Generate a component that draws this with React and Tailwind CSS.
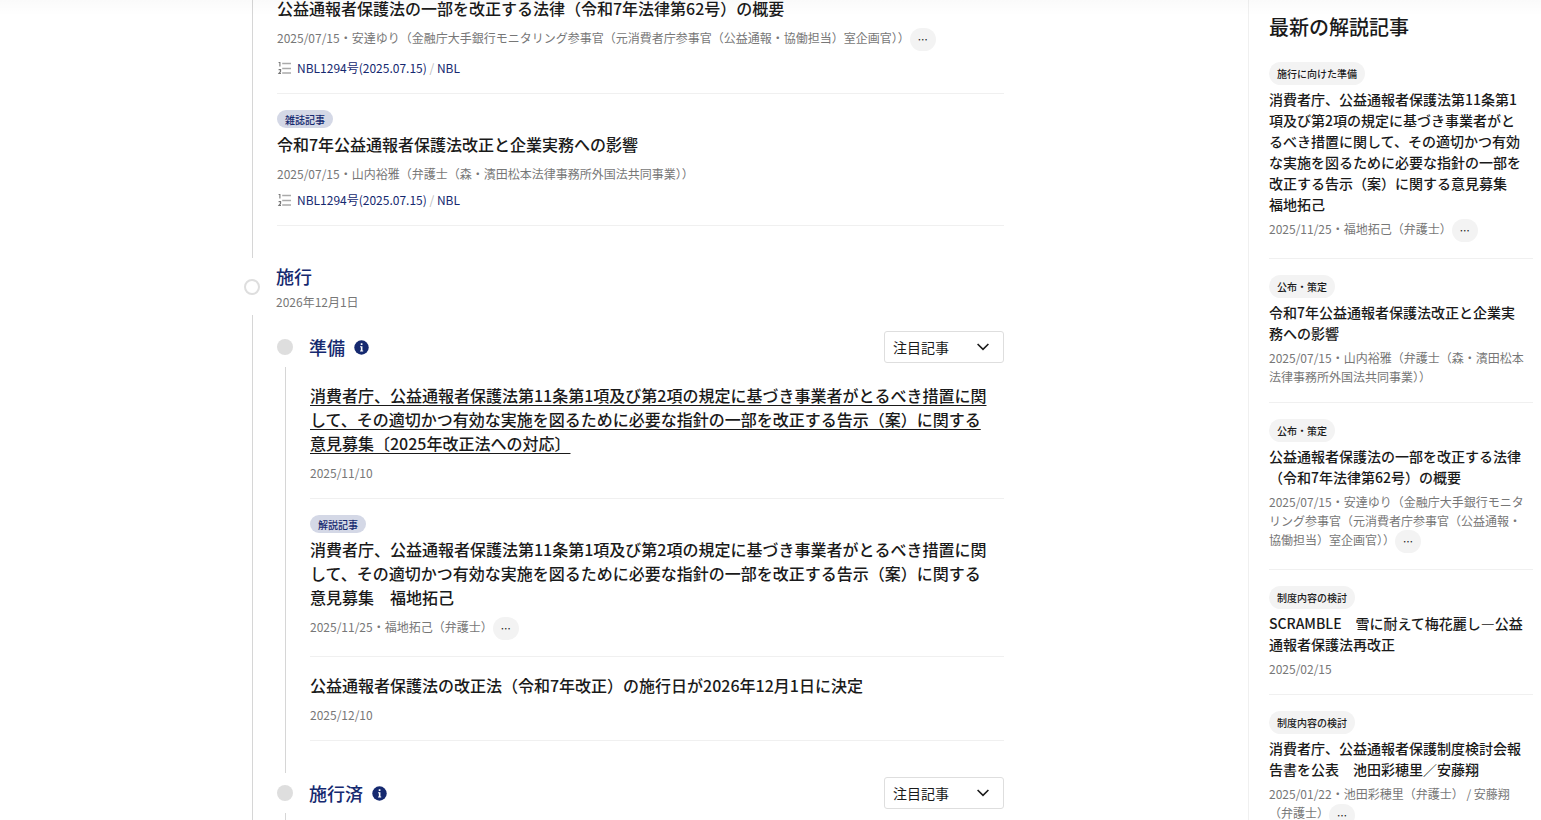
import React, { useState } from 'react';

const enactedArticles = [
  {
    id: 1,
    title: '公益通報者保護法の一部を改正する法律（令和7年法律第62号）の概要',
    meta: '2025/07/15・安達ゆり（金融庁大手銀行モニタリング参事官（元消費者庁参事官（公益通報・協働担当）室企画官））',
    more: true,
    issue: 'NBL1294号(2025.07.15)',
    magazine: 'NBL',
  },
  {
    id: 2,
    badge: '雑誌記事',
    title: '令和7年公益通報者保護法改正と企業実務への影響',
    meta: '2025/07/15・山内裕雅（弁護士（森・濱田松本法律事務所外国法共同事業））',
    issue: 'NBL1294号(2025.07.15)',
    magazine: 'NBL',
  },
];

const preparationArticles = [
  {
    id: 3,
    title: '消費者庁、公益通報者保護法第11条第1項及び第2項の規定に基づき事業者がとるべき措置に関して、その適切かつ有効な実施を図るために必要な指針の一部を改正する告示（案）に関する意見募集〔2025年改正法への対応〕',
    meta: '2025/11/10',
    underline: true,
  },
  {
    id: 4,
    badge: '解説記事',
    title: '消費者庁、公益通報者保護法第11条第1項及び第2項の規定に基づき事業者がとるべき措置に関して、その適切かつ有効な実施を図るために必要な指針の一部を改正する告示（案）に関する意見募集　福地拓己',
    meta: '2025/11/25・福地拓己（弁護士）',
    more: true,
  },
  {
    id: 5,
    title: '公益通報者保護法の改正法（令和7年改正）の施行日が2026年12月1日に決定',
    meta: '2025/12/10',
  },
];

const latestArticles = [
  {
    id: 1,
    badge: '施行に向けた準備',
    title: '消費者庁、公益通報者保護法第11条第1項及び第2項の規定に基づき事業者がとるべき措置に関して、その適切かつ有効な実施を図るために必要な指針の一部を改正する告示（案）に関する意見募集　福地拓己',
    meta: '2025/11/25・福地拓己（弁護士）',
    more: true,
  },
  {
    id: 2,
    badge: '公布・策定',
    title: '令和7年公益通報者保護法改正と企業実務への影響',
    meta: '2025/07/15・山内裕雅（弁護士（森・濱田松本法律事務所外国法共同事業））',
  },
  {
    id: 3,
    badge: '公布・策定',
    title: '公益通報者保護法の一部を改正する法律（令和7年法律第62号）の概要',
    meta: '2025/07/15・安達ゆり（金融庁大手銀行モニタリング参事官（元消費者庁参事官（公益通報・協働担当）室企画官））',
    more: true,
  },
  {
    id: 4,
    badge: '制度内容の検討',
    title: 'SCRAMBLE　雪に耐えて梅花麗し―公益通報者保護法再改正',
    meta: '2025/02/15',
  },
  {
    id: 5,
    badge: '制度内容の検討',
    title: '消費者庁、公益通報者保護制度検討会報告書を公表　池田彩穂里／安藤翔',
    meta: '2025/01/22・池田彩穂里（弁護士） / 安藤翔（弁護士）',
    more: true,
  },
];

function MoreButton() {
  return (
    <button
      type="button"
      aria-label="続きを表示"
      className="inline-flex h-[23px] items-center rounded-full bg-[#f3f3f3] px-2 align-middle text-[10px] font-medium text-[#1a1a1a] hover:bg-gray-200"
    >
      …
    </button>
  );
}

function NumberedListIcon() {
  return (
    <svg viewBox="0 0 14 14" className="h-[14px] w-[14px] shrink-0" fill="none" stroke="#777" strokeWidth="1.1">
      <path d="M1.6 1.5H2.9V5.5" />
      <path d="M1.6 8.6H3.6V10.3L1.9 12.4H4" />
      <path d="M5.2 2.5H14M5.2 7.5H14M5.2 12H14" stroke="#aaa" strokeWidth="1.4" />
    </svg>
  );
}

function InfoIcon() {
  return (
    <svg viewBox="0 0 16 16" className="h-[15px] w-[15px]">
      <circle cx="8" cy="8" r="7.7" fill="#15296f" />
      <path d="M7.2 3.5h1.8v1.8H7.2zM6.5 6.6H9v4.6h.8v1H6.5v-1h.8V7.6h-.8z" fill="#fff" />
    </svg>
  );
}

function Article({ article }) {
  return (
    <article className="border-b border-[#f0f0f0] py-4">
      {article.badge && (
        <span className="mb-1 flex h-[18px] w-fit items-center rounded-full bg-[#d4d8e6] px-2 text-[10px] font-medium text-[#15296f]">
          {article.badge}
        </span>
      )}
      <h3 className="pr-2 text-base leading-6 font-medium text-[#1a1a1a]">
        <a href="#" className={article.underline ? 'underline underline-offset-3' : ''}>{article.title}</a>
      </h3>
      <p className="mt-2 text-xs leading-[19px] text-[#777]">
        {article.meta}
        {article.more && <MoreButton />}
      </p>
      {article.issue && (
        <p className="mt-[7px] flex items-center gap-[6px] text-xs leading-[19px]">
          <NumberedListIcon />
          <span className="text-[#bbb]">
            <a href="#" className="text-[#15296f]">{article.issue}</a>
            {' / '}
            <a href="#" className="text-[#15296f]">{article.magazine}</a>
          </span>
        </p>
      )}
    </article>
  );
}

function Stage({ title, id, children }) {
  const [filter, setFilter] = useState('featured');

  return (
    <section>
      <div className="flex h-8 items-center">
        <span className="size-4 rounded-full bg-[#dedede]" />
        <h3 className="ml-4 text-lg font-medium text-[#15296f]">{title}</h3>
        <button type="button" aria-label={`${title}について`} className="ml-[9px]">
          <InfoIcon />
        </button>
        <div className="relative ml-auto">
          <select
            id={id}
            aria-label="表示する記事"
            value={filter}
            onChange={(e) => setFilter(e.target.value)}
            className="h-8 w-[120px] appearance-none rounded-[3px] border border-[#dedede] bg-white px-2 text-sm text-[#1a1a1a]"
          >
            <option value="featured">注目記事</option>
            <option value="all">すべて</option>
          </select>
          <svg viewBox="0 0 12 8" className="pointer-events-none absolute top-3 right-[15px] h-2 w-3" fill="none" stroke="#1a1a1a" strokeWidth="1.6">
            <path d="M0.6 1L6 6.4L11.4 1" />
          </svg>
        </div>
      </div>
      <div className="my-1 flex">
        <div className="ml-2 w-px shrink-0 bg-[#d6d6d6]" />
        <div className="ml-6 min-w-0 flex-1 pb-8">{children}</div>
      </div>
    </section>
  );
}

function LatestArticle({ article }) {
  return (
    <li className="border-b border-[#f0f0f0] py-4 first:pt-0">
      <span className="mb-1 flex h-[23px] w-fit items-center rounded-full bg-[#f3f3f3] px-2 text-[10px] font-medium text-[#1a1a1a]">
        {article.badge}
      </span>
      <h3 className="pr-2 text-sm leading-[21px] font-medium text-[#1a1a1a]">
        <a href="#">{article.title}</a>
      </h3>
      <p className="mt-1 pr-2 text-xs leading-[19px] text-[#777]">
        {article.meta}
        {article.more && <MoreButton />}
      </p>
    </li>
  );
}

function App() {
  return (
    <div
      lang="ja"
      className="relative flex h-screen overflow-hidden bg-white font-['Noto_Sans_CJK_JP',sans-serif]"
    >
      <div className="pointer-events-none absolute inset-x-0 top-0 z-10 h-4 bg-linear-to-b from-black/2 to-transparent" />

      <main className="min-w-0 flex-1">
        <div className="mx-auto -mt-5 max-w-[760px]">
          <div className="flex">
            <div className="ml-2 w-px shrink-0 bg-[#d6d6d6]" />
            <div className="ml-6 min-w-0 flex-1 pb-8">
              {enactedArticles.map((article) => (
                <Article key={article.id} article={article} />
              ))}
            </div>
          </div>

          <div className="flex h-[57px] items-center gap-4">
            <span className="size-4 shrink-0 rounded-full border-2 border-[#dedede]" />
            <div>
              <h2 className="text-lg leading-[27px] font-medium text-[#15296f]">施行</h2>
              <p className="mt-[2px] text-xs leading-[19px] text-[#777]">2026年12月1日</p>
            </div>
          </div>

          <div className="flex">
            <div className="ml-2 w-px shrink-0 bg-[#d6d6d6]" />
            <div className="ml-6 min-w-0 flex-1 pt-4">
              <Stage id="stage-preparation" title="準備">
                {preparationArticles.map((article) => (
                  <Article key={article.id} article={article} />
                ))}
              </Stage>
              <Stage id="stage-enforced" title="施行済" />
            </div>
          </div>
        </div>
      </main>

      <aside className="w-[293px] shrink-0 border-l border-[#f0f0f0] pt-3 pr-2 pl-5">
        <h2 className="mb-5 text-xl leading-[30px] font-medium text-[#1a1a1a]">最新の解説記事</h2>
        <ul>
          {latestArticles.map((article) => (
            <LatestArticle key={article.id} article={article} />
          ))}
        </ul>
      </aside>
    </div>
  );
}

export default App;
